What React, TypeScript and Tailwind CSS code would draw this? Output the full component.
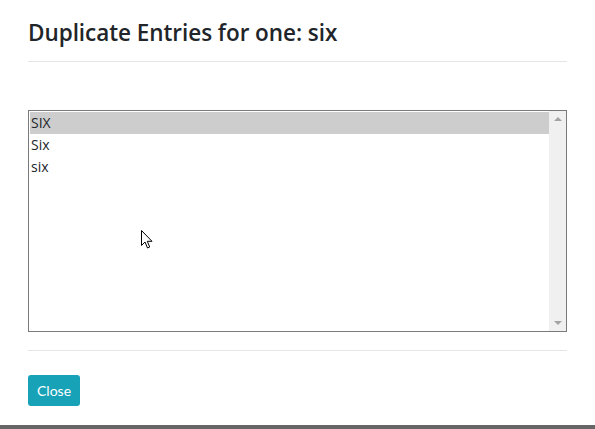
import React from "react";

const entries = ["SIX", "Six", "six"];

// small arrow cursor overlay
const Cursor: React.FC = () => (
  <svg
    className="absolute left-[141px] top-[230px]"
    width="13"
    height="20"
    viewBox="0 0 13 20"
  >
    <path
      d="M0.5 0.5 L0.5 15.5 L4 12 L6.5 18 L8.7 17 L6.3 11.3 L11 11.3 Z"
      fill="#fff"
      stroke="#000"
      strokeWidth="1"
      strokeLinejoin="round"
    />
  </svg>
);

export default function App() {
  const [selected, setSelected] = React.useState(0);

  return (
    <div className="relative w-[595px] h-[429px] bg-white overflow-hidden font-['Open_Sans',sans-serif]">
      <div className="px-[28px]">
        <div className="h-[62px] flex items-center border-b border-[#e5e5e5] pt-[4px]">
          <h2 className="text-[22.5px] font-semibold text-[#212529] tracking-[-0.05px]">
            Duplicate Entries for one: six
          </h2>
        </div>

        <div className="mt-[48px] h-[222px] border border-[#7a7a7a] flex">
          <div className="flex-1 pt-[1px] pl-[1px]">
            {entries.map((e, i) => (
              <div
                key={e}
                onClick={() => setSelected(i)}
                className={`h-[22px] leading-[22px] text-[14px] text-[#212529] pl-[1px] ${
                  selected === i ? "bg-[#cdcdcd]" : ""
                }`}
              >
                {e}
              </div>
            ))}
          </div>
          <div className="w-[17px] bg-[#f0f0f0] flex flex-col items-center justify-between py-[6px]">
            <div className="w-0 h-0 border-l-[4px] border-r-[4px] border-b-[4px] border-l-transparent border-r-transparent border-b-[#a3a3a3]" />
            <div className="w-0 h-0 border-l-[4px] border-r-[4px] border-t-[4px] border-l-transparent border-r-transparent border-t-[#a3a3a3]" />
          </div>
        </div>

        <div className="mt-[18px] border-t border-[#e5e5e5] pt-[24px]">
          <button className="h-[31px] px-[9px] rounded-[3px] bg-[#17a2b8] text-white text-[14px] font-['Lato',sans-serif]">
            Close
          </button>
        </div>
      </div>

      <div className="absolute left-0 right-0 bottom-0 h-[4px] bg-[#666666]" />
      <Cursor />
    </div>
  );
}
